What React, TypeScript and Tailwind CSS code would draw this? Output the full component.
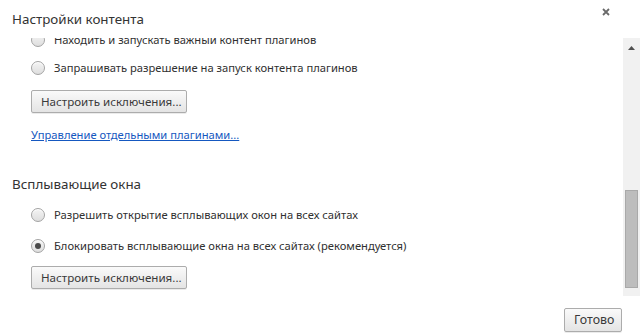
import React from "react";

function Radio({ checked }: { checked?: boolean }) {
  return (
    <span className="w-[14px] h-[14px] rounded-full border border-[#a3a3a3] bg-gradient-to-b from-[#f4f4f4] to-[#dedede] shadow-[inset_0_1px_0_#ffffff] flex items-center justify-center shrink-0">
      {checked && <span className="w-[6px] h-[6px] rounded-full bg-[#4a4a4a]" />}
    </span>
  );
}

function RadioRow({ label, checked, className = "" }: { label: string; checked?: boolean; className?: string }) {
  return (
    <div className={`flex items-center h-[28px] pl-[31px] gap-[9px] ${className}`}>
      <Radio checked={checked} />
      <span className="text-[11.2px] text-[#303030] whitespace-nowrap">{label}</span>
    </div>
  );
}

function Btn({ label, className = "" }: { label: string; className?: string }) {
  return (
    <button className={`h-[23px] border border-[#acacac] rounded-[2px] bg-gradient-to-b from-[#fafafa] to-[#e4e4e4] shadow-[0_1px_0_rgba(0,0,0,0.08)] text-[11.6px] text-[#3a3a3a] px-[9px] whitespace-nowrap leading-none ${className}`}>
      {label}
    </button>
  );
}

export default function App() {
  return (
    <div className="w-[640px] h-[336px] bg-white flex flex-col overflow-hidden" style={{ fontFamily: '"Noto Sans", "Open Sans", sans-serif' }}>
      <div className="h-[38px] flex items-start justify-between shrink-0">
        <div className="pl-[12px] pt-[9px] text-[13.4px] text-[#333] leading-[20px]">Настройки контента</div>
        <svg width="8" height="8" viewBox="0 0 8 8" className="mt-[8px] mr-[30px]">
          <path d="M1 1 L7 7 M7 1 L1 7" stroke="#6a6a6a" strokeWidth="1.8" />
        </svg>
      </div>
      <div className="h-[258px] flex shrink-0">
        <div className="flex-1 overflow-hidden">
          <div className="-mt-[12px] flex flex-col items-start">
            <RadioRow label="Находить и запускать важный контент плагинов" />
            <RadioRow label="Запрашивать разрешение на запуск контента плагинов" />
            <Btn label="Настроить исключения..." className="ml-[31px] mt-[8px] w-[156px]" />
            <a href="#" className="ml-[31px] mt-[12px] h-[20px] leading-[20px] text-[11.2px] text-[#1558c0] underline whitespace-nowrap">Управление отдельными плагинами...</a>
            <div className="ml-[12px] mt-[29px] h-[20px] leading-[20px] text-[13.4px] text-[#333]">Всплывающие окна</div>
            <RadioRow label="Разрешить открытие всплывающих окон на всех сайтах" className="mt-[7px]" />
            <RadioRow label="Блокировать всплывающие окна на всех сайтах (рекомендуется)" checked className="mt-[3px]" />
            <Btn label="Настроить исключения..." className="ml-[31px] mt-[6px] w-[156px]" />
          </div>
        </div>
        <div className="w-[17px] bg-[#f1f1f1] flex flex-col items-center">
          <svg width="7" height="4" viewBox="0 0 7 4" className="mt-[8px]">
            <path d="M0 4 L3.5 0 L7 4 Z" fill="#505050" />
          </svg>
          <div className="flex-1" />
          <div className="w-[13px] h-[98px] bg-[#bdbdbd] border border-[#a9a9a9] mb-[8px]" />
        </div>
      </div>
      <div className="flex-1 flex justify-end items-start pt-[12px] pr-[18px]">
        <Btn label="Готово" className="w-[58px] h-[24px] text-[12.4px]" />
      </div>
    </div>
  );
}
